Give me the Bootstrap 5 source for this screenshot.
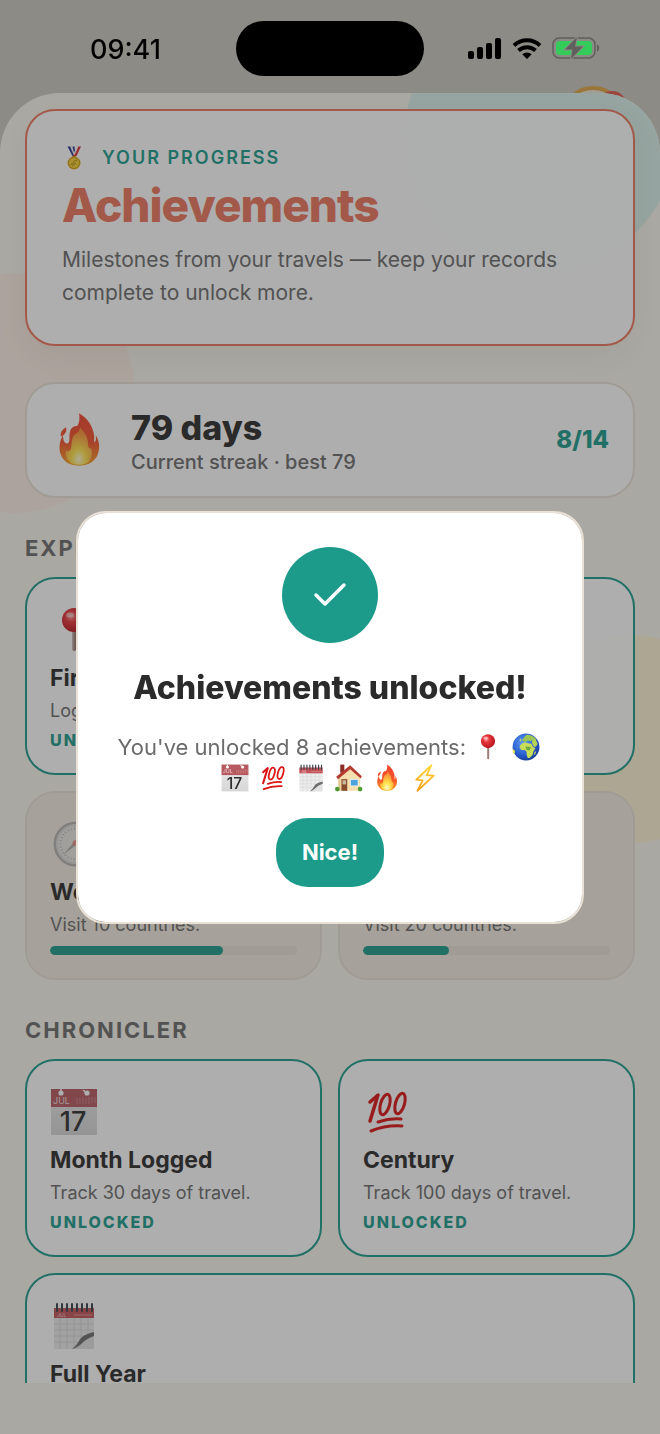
<!DOCTYPE html>
<html lang="en">
<head>
<meta charset="utf-8">
<meta name="viewport" content="width=device-width, initial-scale=1">
<title>Achievements</title>
<link href="https://cdn.jsdelivr.net/npm/bootstrap@5.3.0/dist/css/bootstrap.min.css" rel="stylesheet">
<style>
:root{--teal:#1c9b8b;--coral:#ee765c;--ink:#2b2b2b;--soft:#6b6b6b;--paper:#f9f6ee;--line:#e9e1d5}
body{font-family:Inter,"Liberation Sans",sans-serif;color:var(--ink);background:#c8c7be;overflow:hidden}
.phone{height:100vh}
.statusbar{height:93px;z-index:1060;color:#000}
.clock{font-size:27px;line-height:32px;font-weight:500;left:90px;top:34px}
.island{width:188px;height:55px;border-radius:28px;background:#000;margin-top:21px}
.signals{right:60px;top:36px;gap:10px}
.avatar{width:64px;height:64px;right:35px;top:86px;border:4px solid #e0a545;background:#ece5d8}
.avatar-dot{width:30px;height:30px;right:33px;top:91px;background:#e0574a}
.sheet{background:var(--paper);border-radius:60px 60px 0 0;min-height:0}
.blob{border-radius:50%}
.blob-mint{width:272px;height:272px;right:-17px;top:-94px;background:#d9f0ea}
.blob-peach{width:240px;height:240px;left:-105px;top:180px;background:#fdeee5}
.blob-lemon{width:208px;height:208px;right:-75px;top:542px;background:#fdf3d3}
.scroller{min-height:0;padding:16px 25px 0}
.homebar{height:51px}
.tile{background:rgba(255,255,255,.97);border:2px solid var(--line);border-radius:30px}
.tile-hero{border-color:var(--coral);padding:34px 35px 35px;box-shadow:0 12px 30px rgba(90,80,60,.07)}
.eyebrow{font-size:18px;line-height:26px;font-weight:600;letter-spacing:2px;color:var(--teal);gap:16px}
.hero-title{font-size:46px;line-height:56px;font-weight:800;letter-spacing:-1px;color:var(--coral);margin:6px 0 10px}
.hero-copy{font-size:21px;line-height:33px;color:var(--soft)}
.streak{margin-top:36px;height:116px;padding:0 24px}
.streak-num{font-size:34px;line-height:38px;font-weight:800}
.streak-sub{font-size:20px;line-height:30px;font-weight:500;color:var(--soft)}
.streak-text{margin-left:24px;padding-top:6px}
.tally{font-size:24px;line-height:30px;font-weight:800;color:var(--teal)}
.section-title{font-size:22px;line-height:29px;font-weight:700;letter-spacing:2px;color:var(--soft);margin:36px 0 14px}
.tiles{display:grid;grid-template-columns:1fr 1fr;gap:16px}
.award{padding:27px 23px 20px;border-color:var(--teal)}
.award-wide{grid-column:1/-1}
.award-locked{background:#f3ece0;border-color:#e9e1d5;padding-bottom:23px}
.award-locked .emo{opacity:.55}
.award-name{font-size:23px;line-height:33px;font-weight:700;margin:8px 0 0}
.award-copy{font-size:18px;line-height:32px;color:var(--soft)}
.award-state{font-size:16px;line-height:26px;font-weight:800;letter-spacing:2px;color:var(--teal)}
.meter{height:9px;margin-top:5px;border-radius:5px;background:#e9e1d5}
.meter .progress-bar{background:var(--teal);border-radius:5px}
.emo{width:48px;height:48px;display:block}
.emo-sm{width:24px;height:24px}
.emo-lg{width:56px;height:56px}
.emo-in{width:28px;height:28px;display:inline-block;margin:0 2px;vertical-align:-6px}
.veil{background:rgba(43,43,43,.38)}
.veil .modal-dialog{max-width:508px}
.veil .modal-content{border:2px solid var(--line);border-radius:30px;padding:34px 36px 35px}
.tick{width:96px;height:96px;background:var(--teal)}
.pop-title{font-size:32px;line-height:42px;font-weight:800;margin:24px 0 23px}
.pop-copy{font-size:22px;line-height:31px;color:var(--soft)}
.btn-nice{font-size:22px;line-height:31px;font-weight:700;color:#fff;background:var(--teal);border:0;border-radius:32px;padding:19px 26px;margin-top:24px}
.btn-nice:hover{color:#fff;background:#178376}
</style>
</head>
<body>
<svg width="0" height="0" class="position-absolute" aria-hidden="true">
  <defs>
    <linearGradient id="gFire" x1="0" y1="0" x2="0" y2="1"><stop offset="0" stop-color="#f2442e"/><stop offset=".55" stop-color="#f4522a"/><stop offset="1" stop-color="#f7a325"/></linearGradient>
    <radialGradient id="gFireIn" cx=".5" cy=".85" r=".75"><stop offset="0" stop-color="#fffbd0"/><stop offset=".35" stop-color="#ffe24a"/><stop offset="1" stop-color="#fb8a36"/></radialGradient>
    <radialGradient id="gPin" cx=".38" cy=".35" r=".7"><stop offset="0" stop-color="#ff9a98"/><stop offset=".35" stop-color="#e5343a"/><stop offset="1" stop-color="#b3141c"/></radialGradient>
    <radialGradient id="gSea" cx=".4" cy=".35" r=".7"><stop offset="0" stop-color="#5f9df0"/><stop offset=".6" stop-color="#2b5fd0"/><stop offset="1" stop-color="#173a94"/></radialGradient>
    <linearGradient id="gPaper" x1="0" y1="0" x2="0" y2="1"><stop offset="0" stop-color="#ececec"/><stop offset="1" stop-color="#d6d6d6"/></linearGradient>
    <linearGradient id="gBolt" x1="0" y1="0" x2="0" y2="1"><stop offset="0" stop-color="#ffd83a"/><stop offset="1" stop-color="#f79a12"/></linearGradient>
    <symbol id="e-fire" viewBox="0 0 48 48">
      <g transform="translate(3.400) scale(.86 1)">
      <path fill="url(#gFire)" d="M24 1c8 4 14 11 15 19 .4 3-.4 5 .4 6 1.600-.8 1.800-3 1.200-6 4 5 4.400 12 1.800 17C39 43 32 46 24 46S9 43 6 37c-3-6-1-13 2-17 .2 4 1 7 4 7 3.500-.5 2-5 2.500-8C15 14 18 12 22 12c2-2 3-6 2-11zM11 13c1 3 0 6-5 8-1-3 1-6 5-8z"/>
      <path fill="url(#gFireIn)" d="M25 13c4 4 8 8 8 14 0 3 1 5 3 4 2 5 0 9-3 12-5 3-13 3-18 0-4-3-5-6-4-10 2 1 4 1 5-2 1-4 0-9 4-12 3-2 5-3 5-6z"/>
      </g>
    </symbol>
    <symbol id="e-medal" viewBox="0 0 48 48">
      <path fill="#27378f" d="M11 1h7l9 19h-6z"/><path fill="#f3f3f3" d="M16 1h5l5 12-2 6z"/><path fill="#27378f" d="M21 1h4l1 9-2 4z"/>
      <path fill="#d92c35" d="M31 1h7l-9 19h-7z"/><path fill="#fff" d="M30 1h3l-8 17-2-2z"/>
      <rect x="20" y="20" width="8" height="5" rx="2" fill="#c79512"/>
      <circle cx="24" cy="34" r="13" fill="#d8a413"/><circle cx="24" cy="34" r="10" fill="#f2cf35"/>
      <path fill="none" stroke="#b98708" stroke-width="2" d="M17 37l5-2 3-5 5-2M20 40l8-6"/>
    </symbol>
    <symbol id="e-pin" viewBox="0 0 48 48">
      <rect x="22.500" y="22" width="3.500" height="23" rx="1.700" fill="#94746c"/><rect x="23.300" y="22" width="1" height="22" fill="#c8b2aa"/>
      <circle cx="24" cy="14" r="12" fill="url(#gPin)"/><ellipse cx="20" cy="9" rx="4" ry="2.500" fill="#fff" opacity=".45"/>
    </symbol>
    <symbol id="e-globe" viewBox="0 0 48 48">
      <circle cx="24" cy="24" r="23" fill="url(#gSea)"/>
      <path fill="#9cc653" d="M20 8l5-5c7 0 13 3 17 8l-3 4-4-3-3 2-5-1-3 2-5-1-2-2 3-2z"/>
      <path fill="#c9de58" d="M17 18l6-2 5 2 5 0 3 6 4 2-3 5-2 7-5 5-3 0-2-6 0-5-3-3-6 0-3-4 1-4z"/>
      <path fill="#b9d452" d="M34 13l7-1 3 7-3 4-3 1-3-5z"/>
      <path fill="#e6e34a" d="M1 28c3 0 5 3 4 6l-2 2c-1-2-2-5-2-8zM38 35l2-4 1 2-2 5z"/><path fill="#6ea843" d="M23 23l10 1-3 6-5-1z"/><path fill="#c9de58" d="M13 12l2-3 1 3-2 3z"/>
    </symbol>
    <symbol id="e-date" viewBox="0 0 48 48">
      <rect x="1" y="1" width="46" height="46" fill="url(#gPaper)"/><rect x="1" y="1" width="46" height="18" fill="#b75a5f"/>
      <circle cx="11" cy="5" r="2.600" fill="#fff"/><circle cx="37" cy="5" r="2.600" fill="#fff"/><path stroke="#fff" stroke-width="1.500" d="M11 5V1M37 5l-4-3"/>
      <text x="3" y="16" font-size="9" font-family="Inter" fill="#f2d9da">JUL</text>
      <path stroke="#cc8588" stroke-width="1" d="M27 10v6M30 10v6M33 9v7M36 10v6M39 9v7M42 9v6M45 9v6"/>
      <text x="23" y="43" font-size="27" font-family="Inter" font-weight="500" text-anchor="middle" fill="#2e2e2e">17</text>
    </symbol>
    <symbol id="e-hundred" viewBox="0 0 48 48">
      <g fill="none" stroke="#dc1414" stroke-linecap="round" stroke-linejoin="round">
        <polyline points="7,14 15,7 7,33" stroke-width="3.500"/>
        <ellipse cx="22" cy="16.500" rx="4.500" ry="10.500" transform="rotate(16 22 16.500)" stroke-width="3"/>
        <ellipse cx="37" cy="15.500" rx="4.500" ry="10.500" transform="rotate(16 37 15.500)" stroke-width="3"/>
        <path d="M15 34q12-4 23-3" stroke-width="3"/><path d="M8 43q15-6 31-5" stroke-width="3"/>
      </g>
    </symbol>
    <symbol id="e-pad" viewBox="0 0 48 48">
      <path fill="#ececec" d="M4 6h40v26L31 47H4z"/><rect x="4" y="6" width="40" height="10" fill="#c25358"/>
      <text x="7" y="15" font-size="5" font-family="Inter" fill="#f2c9ca">JUL</text><path stroke="#dd9294" d="M24 13h18"/>
      <path stroke="#d2d2d2" stroke-width=".8" d="M4 22h40M4 28h40M4 34h40M4 40h36M10 16v31M17 16v31M24 16v31M31 16v31M38 16v24"/>
      <path fill="#e2e2e2" d="M44 30v17H24c9-3 10-14 20-17z"/><path fill="#6e6e6e" d="M44 30c-9 2-13 5-15 9-2 3-4 6-7 8 8-1 10-9 22-13z"/>
      <path stroke="#35414b" stroke-width="2" stroke-linecap="round" d="M7 2v7M12 2v7M17 2v7M22 2v7M27 2v7M32 2v7M37 2v7M42 2v7"/>
    </symbol>
    <symbol id="e-house" viewBox="0 0 48 48">
      <rect x="9" y="1" width="7" height="14" fill="#8d2c27"/><path fill="#f5dfae" d="M6 24L26 6l17 18v22H6z"/><path fill="#dfc58c" d="M6 24l3-3v25H6z"/>
      <path fill="#b53a32" d="M26 2l20 19-2 4L26 9 5 26l-3-4z"/>
      <rect x="11" y="26" width="10" height="20" fill="#8a4b2b"/><rect x="13" y="28" width="6" height="7" fill="#c9b9a0"/>
      <rect x="26" y="26" width="14" height="12" fill="#fff"/><rect x="27" y="27" width="12" height="10" fill="#4fa3dc"/>
      <circle cx="4" cy="43" r="4" fill="#4f9a33"/><circle cx="43" cy="43" r="4" fill="#4f9a33"/>
    </symbol>
    <symbol id="e-bolt" viewBox="0 0 48 48">
      <path fill="#fffbe6" stroke="url(#gBolt)" stroke-width="3" stroke-linejoin="round" d="M35 2L9 27l11 1L11 46l28-26-12-1z"/>
    </symbol>
    <symbol id="e-compass" viewBox="0 0 48 48">
      <circle cx="26" cy="24" r="21" fill="#e4e4e6" stroke="#85888c" stroke-width="3"/><circle cx="26" cy="24" r="19" fill="none" stroke="#c9cbce" stroke-width="2"/>
      <circle cx="26" cy="24" r="15.500" fill="none" stroke="#8b8b8b" stroke-width="2" stroke-dasharray="1 2.200"/>
      <path fill="#e8433d" d="M24 21l12-9-8 13z"/><path fill="#777" d="M24 22L13 35l13-10z"/><circle cx="25" cy="23" r="2.500" fill="#e8433d"/>
    </symbol>
  </defs>
</svg>

<div class="phone d-flex flex-column position-relative">
  <div class="avatar rounded-circle position-absolute"></div>
  <div class="avatar-dot rounded-circle position-absolute"></div>
  <header class="statusbar position-relative flex-shrink-0">
    <div class="clock position-absolute">09:41</div>
    <div class="d-flex justify-content-center"><div class="island"></div></div>
    <div class="signals position-absolute d-flex align-items-center">
      <svg width="34" height="24" viewBox="0 0 34 24" aria-label="Signal"><g fill="#000"><rect x="0" y="15" width="6" height="8" rx="2"/><rect x="9" y="11" width="6" height="12" rx="2"/><rect x="18" y="7" width="6" height="16" rx="2"/><rect x="27" y="2" width="6" height="21" rx="2"/></g></svg>
      <svg width="30" height="24" viewBox="0 0 30 24" aria-label="Wi-Fi"><g fill="none" stroke="#000" stroke-width="4"><path d="M2 9.500a19 19 0 0 1 26 0"/><path d="M6.500 14.500a12.500 12.500 0 0 1 17 0"/></g><path d="M15 23l-4.700-4.700a7 7 0 0 1 9.400 0z"/></svg>
      <svg width="48" height="24" viewBox="0 0 48 24" aria-label="Battery charging"><rect x="1" y="2" width="42" height="20" rx="6.500" fill="none" stroke="#605f5c" stroke-width="1.500"/><rect x="4" y="5" width="36" height="14" rx="4" fill="#33cc5a"/><path d="M45 8.500c3 1 3 6 0 7z" fill="#605f5c"/><path d="M25 1L13 13.500h7.500L19 23l12-12.500h-8z" fill="#605f5c" stroke="#8c8b86" stroke-width="2" paint-order="stroke"/></svg>
    </div>
  </header>

  <main class="sheet flex-grow-1 d-flex flex-column position-relative overflow-hidden">
    <div class="blob blob-mint position-absolute"></div>
    <div class="blob blob-peach position-absolute"></div>
    <div class="blob blob-lemon position-absolute"></div>

    <div class="scroller flex-grow-1 overflow-hidden position-relative">
      <section class="tile tile-hero">
        <div class="eyebrow d-flex align-items-center"><svg class="emo-sm"><use href="#e-medal"/></svg>YOUR PROGRESS</div>
        <h1 class="hero-title">Achievements</h1>
        <p class="hero-copy mb-0">Milestones from your travels — keep your records complete to unlock more.</p>
      </section>

      <section class="tile streak d-flex align-items-center">
        <svg class="emo-lg flex-shrink-0"><use href="#e-fire"/></svg>
        <div class="streak-text flex-grow-1">
          <div class="streak-num">79 days</div>
          <div class="streak-sub">Current streak · best 79</div>
        </div>
        <div class="tally">8/14</div>
      </section>

      <h2 class="section-title">EXPLORER</h2>
      <div class="tiles">
        <article class="tile award">
          <svg class="emo"><use href="#e-pin"/></svg>
          <h3 class="award-name">First Trip</h3>
          <div class="award-copy">Log a first trip.</div>
          <div class="award-state">UNLOCKED</div>
        </article>
        <article class="tile award">
          <svg class="emo"><use href="#e-globe"/></svg>
          <h3 class="award-name">Explorer</h3>
          <div class="award-copy">Visit 5 countries.</div>
          <div class="award-state">UNLOCKED</div>
        </article>
        <article class="tile award award-locked">
          <svg class="emo"><use href="#e-compass"/></svg>
          <h3 class="award-name">World Ten</h3>
          <div class="award-copy">Visit 10 countries.</div>
          <div class="progress meter" role="progressbar" aria-label="Countries" aria-valuenow="70" aria-valuemin="0" aria-valuemax="100"><div class="progress-bar" style="width:70%"></div></div>
        </article>
        <article class="tile award award-locked">
          <svg class="emo"><use href="#e-globe"/></svg>
          <h3 class="award-name">Globetrotter</h3>
          <div class="award-copy">Visit 20 countries.</div>
          <div class="progress meter" role="progressbar" aria-label="Countries" aria-valuenow="35" aria-valuemin="0" aria-valuemax="100"><div class="progress-bar" style="width:35%"></div></div>
        </article>
      </div>

      <h2 class="section-title">CHRONICLER</h2>
      <div class="tiles">
        <article class="tile award">
          <svg class="emo"><use href="#e-date"/></svg>
          <h3 class="award-name">Month Logged</h3>
          <div class="award-copy">Track 30 days of travel.</div>
          <div class="award-state">UNLOCKED</div>
        </article>
        <article class="tile award">
          <svg class="emo"><use href="#e-hundred"/></svg>
          <h3 class="award-name">Century</h3>
          <div class="award-copy">Track 100 days of travel.</div>
          <div class="award-state">UNLOCKED</div>
        </article>
        <article class="tile award award-wide">
          <svg class="emo"><use href="#e-pad"/></svg>
          <h3 class="award-name">Full Year</h3>
        </article>
      </div>
    </div>
    <div class="homebar flex-shrink-0"></div>
  </main>
</div>

<div class="modal veil d-block" role="dialog" aria-modal="true" aria-labelledby="popTitle">
  <div class="modal-dialog modal-dialog-centered mx-auto">
    <div class="modal-content align-items-center text-center">
      <div class="tick rounded-circle d-flex align-items-center justify-content-center">
        <svg width="36" height="28" viewBox="0 0 36 28" fill="none" stroke="#fff" stroke-width="3.500" stroke-linecap="round" stroke-linejoin="round"><path d="M4 14l9 9L32 4"/></svg>
      </div>
      <h2 class="pop-title" id="popTitle">Achievements unlocked!</h2>
      <p class="pop-copy mb-0">You've unlocked 8 achievements: <svg class="emo-in"><use href="#e-pin"/></svg> <svg class="emo-in"><use href="#e-globe"/></svg> <svg class="emo-in"><use href="#e-date"/></svg> <svg class="emo-in"><use href="#e-hundred"/></svg> <svg class="emo-in"><use href="#e-pad"/></svg> <svg class="emo-in"><use href="#e-house"/></svg> <svg class="emo-in"><use href="#e-fire"/></svg> <svg class="emo-in"><use href="#e-bolt"/></svg></p>
      <button type="button" class="btn btn-nice">Nice!</button>
    </div>
  </div>
</div>
<script src="https://cdn.jsdelivr.net/npm/bootstrap@5.3.0/dist/js/bootstrap.bundle.min.js"></script>
</body>
</html>
